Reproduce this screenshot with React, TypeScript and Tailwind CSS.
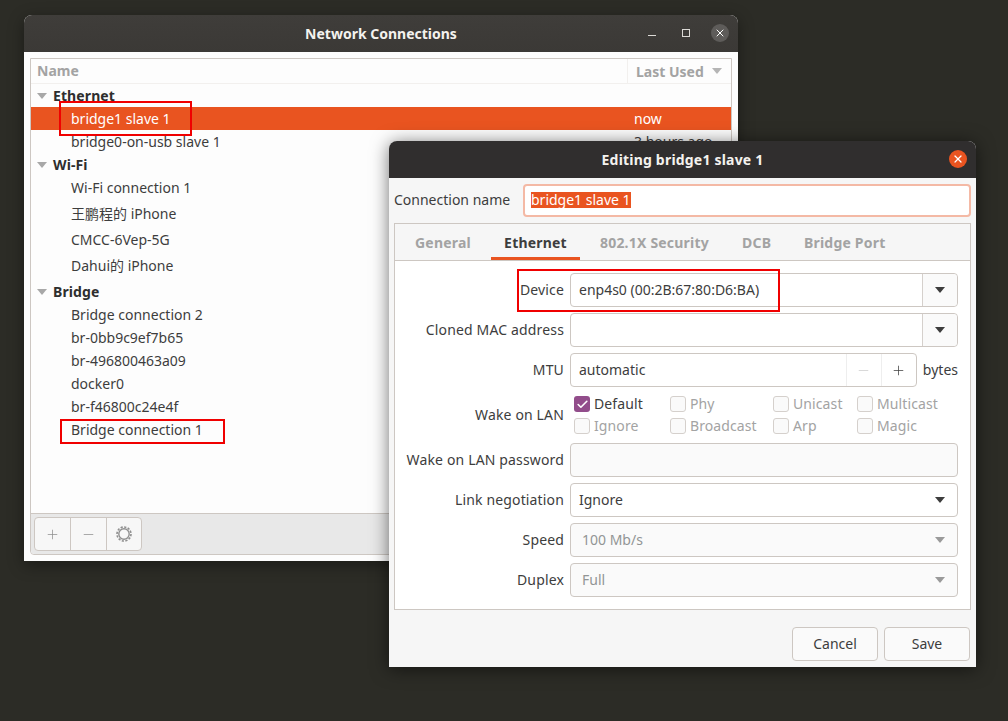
import { Check, Minus, Plus, X } from 'lucide-react'

const font = 'font-["Noto_Sans","Noto_Sans_CJK_SC",sans-serif]'

type Row = { name: string; group?: boolean; h: string; selected?: boolean; used?: string }

const rows: Row[] = [
  { name: 'Ethernet', group: true, h: 'h-[23px]' },
  { name: 'bridge1 slave 1', h: 'h-[23px]', selected: true, used: 'now' },
  { name: 'bridge0-on-usb slave 1', h: 'h-[23px]', used: '3 hours ago' },
  { name: 'Wi-Fi', group: true, h: 'h-[23px]' },
  { name: 'Wi-Fi connection 1', h: 'h-[23px]' },
  { name: '王鹏程的 iPhone', h: 'h-[29px]' },
  { name: 'CMCC-6Vep-5G', h: 'h-[23px]' },
  { name: 'Dahui的 iPhone', h: 'h-[29px]' },
  { name: 'Bridge', group: true, h: 'h-[23px]' },
  { name: 'Bridge connection 2', h: 'h-[23px]' },
  { name: 'br-0bb9c9ef7b65', h: 'h-[23px]' },
  { name: 'br-496800463a09', h: 'h-[23px]' },
  { name: 'docker0', h: 'h-[23px]' },
  { name: 'br-f46800c24e4f', h: 'h-[23px]' },
  { name: 'Bridge connection 1', h: 'h-[23px]' },
]

function Caret({ dim }: { dim?: boolean }) {
  return (
    <svg width="10" height="6" viewBox="0 0 10 6" className={dim ? 'fill-[#9a9a9a]' : 'fill-[#3d3d3d]'}>
      <path d="M0 0h10L5 6z" />
    </svg>
  )
}

function ListRow({ row }: { row: Row }) {
  return (
    <div
      className={`flex items-center text-[14px] ${row.h} ${
        row.selected ? 'bg-[#e95420] text-white' : 'text-[#3d3d3d]'
      }`}
    >
      <div className="flex w-[597px] items-center">
        {row.group ? (
          <>
            <svg width="10" height="6" viewBox="0 0 10 6" className="ml-[6px] mr-[6px] fill-[#a8a8a8]">
              <path d="M0 0h10L5 6z" />
            </svg>
            <span className="font-bold tracking-[0.1px] text-[#2e2e2e]">{row.name}</span>
          </>
        ) : (
          <span className="pl-[40px]">{row.name}</span>
        )}
      </div>
      {row.used && <span className="pl-[6px]">{row.used}</span>}
    </div>
  )
}

function Label({ text }: { text: string }) {
  return <div className="w-[169px] shrink-0 pb-[2px] pr-[6px] text-right tracking-[0.15px] text-[#3d3d3d]">{text}</div>
}

function Combo({ value, split, dim }: { value?: string; split?: boolean; dim?: boolean }) {
  return (
    <div
      className={`flex h-[34px] flex-1 items-center rounded-[4px] border border-[#cdc7c2] ${
        dim ? 'bg-[#fafafa] text-[#929595]' : 'bg-white text-[#3d3d3d]'
      }`}
    >
      <span className={`flex-1 pb-[2px] ${dim ? 'pl-[11px]' : 'pl-[8px]'}`}>{value}</span>
      {split ? (
        <span className="flex h-full w-[35px] items-center justify-center rounded-r-[4px] border-l border-[#d5d0cc] bg-[#fafafa]">
          <Caret />
        </span>
      ) : (
        <span className="flex w-[35px] items-center justify-center">
          <Caret dim={dim} />
        </span>
      )}
    </div>
  )
}

function Box({ label, on, w }: { label: string; on?: boolean; w: string }) {
  return (
    <div className={`flex items-center ${w}`}>
      {on ? (
        <span className="flex h-[16px] w-[16px] items-center justify-center rounded-[3px] bg-[#924d8b] text-white">
          <Check size={13} strokeWidth={3} />
        </span>
      ) : (
        <span className="h-[16px] w-[16px] rounded-[3px] border border-[#d5d0cc] bg-[#fafafa]" />
      )}
      <span className={`ml-[4px] pb-[1px] tracking-[0.1px] ${on ? 'text-[#3d3d3d]' : 'text-[#a3a3a3]'}`}>{label}</span>
    </div>
  )
}

function ToolBtn({ children, w, last }: { children: React.ReactNode; w: string; last?: boolean }) {
  return (
    <div
      className={`flex h-full items-center justify-center text-[#8f8f8f] ${w} ${
        last ? '' : 'border-r border-[#cdc7c2]'
      }`}
    >
      {children}
    </div>
  )
}

export default function App() {
  return (
    <div className={`relative h-[721px] w-[1008px] overflow-hidden bg-[#2c2c26] ${font}`}>
      {/* Network Connections window */}
      <div className="absolute left-[24px] top-[15px] flex h-[546px] w-[714px] flex-col overflow-hidden rounded-t-[8px] bg-[#fdfdfd] shadow-[0_4px_16px_rgba(0,0,0,0.4)]">
        <div className="relative flex h-[37px] shrink-0 items-center justify-center bg-gradient-to-b from-[#3f3d3a] to-[#3b3936] text-[14px] font-bold text-[#f4f2ee]">
          Network Connections
          <div className="absolute right-[9px] top-[9px] flex h-[18px] items-center">
            <span className="mr-[26px] h-[1px] w-[8px] translate-y-[2px] bg-[#dcdad6]" />
            <span className="mr-[21px] h-[8px] w-[8px] border border-[#dcdad6]" />
            <span className="flex h-[18px] w-[18px] items-center justify-center rounded-full bg-[#5e5c5a] text-white">
              <X size={12} strokeWidth={2} />
            </span>
          </div>
        </div>
        <div className="flex flex-1 flex-col p-[6px]">
          <div className="flex flex-1 flex-col rounded-b-[4px] border border-[#cdc7c2]">
            <div className="flex h-[25px] shrink-0 border-b border-[#f2f0ee] text-[14px] font-bold text-[#a3a3a3]">
              <div className="w-[597px] border-r border-[#f2f0ee] pl-[6px] leading-[24px]">Name</div>
              <div className="flex items-center pl-[8px]">
                Last Used
                <svg width="10" height="6" viewBox="0 0 10 6" className="ml-[8px] fill-[#b5b5b5]">
                  <path d="M0 0h10L5 6z" />
                </svg>
              </div>
            </div>
            <div className="flex-1">
              {rows.map((r) => (
                <ListRow key={r.name} row={r} />
              ))}
            </div>
            <div className="flex h-[41px] shrink-0 items-start rounded-b-[4px] border-t border-[#cdc7c2] bg-[#e8e8e8] p-[3px]">
              <div className="flex h-[34px] items-center rounded-[4px] border border-[#cdc7c2] bg-[#f7f7f7]">
                <ToolBtn w="w-[36px]">
                  <Plus size={15} strokeWidth={1.2} />
                </ToolBtn>
                <ToolBtn w="w-[36px]">
                  <Minus size={15} strokeWidth={1.2} />
                </ToolBtn>
                <ToolBtn w="w-[34px]" last>
                  <svg width="18" height="18" viewBox="0 0 18 18" fill="none" stroke="#8f8f8f">
                    <circle cx="9" cy="9" r="5.2" strokeWidth="1.4" />
                    <circle cx="9" cy="9" r="7" strokeWidth="1.6" strokeDasharray="2.2 1.46" />
                  </svg>
                </ToolBtn>
              </div>
            </div>
          </div>
        </div>
      </div>

      {/* Editing dialog */}
      <div className="absolute left-[389px] top-[141px] flex h-[526px] w-[587px] flex-col overflow-hidden rounded-t-[8px] bg-[#f6f6f6] text-[14px] text-[#3d3d3d] shadow-[0_2px_18px_rgba(0,0,0,0.55)]">
        <div className="relative flex h-[37px] shrink-0 items-center justify-center bg-[#302e2e] font-bold tracking-[0.2px] text-[#f4f2ee]">
          Editing bridge1 slave 1
          <span className="absolute right-[9px] top-[9px] flex h-[18px] w-[18px] items-center justify-center rounded-full bg-[#e95420] text-white">
            <X size={12} strokeWidth={2.4} />
          </span>
        </div>
        <div className="flex flex-col pl-[5px] pr-[5px] pt-[6px]">
          <div className="flex items-center">
            <span className="w-[129px] shrink-0 pb-[2px]">Connection name</span>
            <div className="flex h-[33px] flex-1 items-center rounded-[4px] border-2 border-[#f4b9a5] bg-white pb-[1px] pl-[6px]">
              <span className="bg-[#e95420] leading-[16px] text-white">bridge1 slave 1</span>
            </div>
          </div>
          <div className="mt-[6px] flex h-[387px] flex-col border border-[#cdc7c2] bg-white">
            <div className="flex h-[37px] shrink-0 items-stretch border-b border-[#cdc7c2] bg-[#f6f6f6] font-bold tracking-[0.2px] text-[#a3a3a3]">
              <div className="flex w-[96px] items-center pl-[20px]">General</div>
              <div className="flex w-[89px] items-center justify-center border-b-[3px] border-[#e95420] pt-[3px] text-[#3d3d3d]">Ethernet</div>
              <div className="flex w-[162px] items-center pl-[20px]">802.1X Security</div>
              <div className="flex w-[62px] items-center">DCB</div>
              <div className="flex items-center">Bridge Port</div>
            </div>
            <div className="flex flex-col gap-[6px] pl-[6px] pr-[12px] pt-[12px]">
              <div className="flex items-center">
                <Label text="Device" />
                <Combo value="enp4s0 (00:2B:67:80:D6:BA)" split />
              </div>
              <div className="flex items-center">
                <Label text="Cloned MAC address" />
                <Combo split />
              </div>
              <div className="flex items-center">
                <Label text="MTU" />
                <div className="flex h-[34px] flex-1 items-center rounded-[4px] border border-[#cdc7c2] bg-white">
                  <span className="flex-1 pb-[2px] pl-[8px]">automatic</span>
                  <span className="flex h-full w-[35px] items-center justify-center border-l border-[#eeeeee] text-[#cccccc]">
                    <Minus size={15} strokeWidth={1.2} />
                  </span>
                  <span className="flex h-full w-[35px] items-center justify-center border-l border-[#eeeeee] text-[#3d3d3d]">
                    <Plus size={15} strokeWidth={1.2} />
                  </span>
                </div>
                <span className="ml-[6px] pb-[2px]">bytes</span>
              </div>
              <div className="flex h-[44px] items-center">
                <Label text="Wake on LAN" />
                <div className="flex flex-col gap-[2px] pl-[4px]">
                  <div className="flex h-[20px]">
                    <Box label="Default" on w="w-[96px]" />
                    <Box label="Phy" w="w-[103px]" />
                    <Box label="Unicast" w="w-[84px]" />
                    <Box label="Multicast" w="w-[90px]" />
                  </div>
                  <div className="flex h-[20px]">
                    <Box label="Ignore" w="w-[96px]" />
                    <Box label="Broadcast" w="w-[103px]" />
                    <Box label="Arp" w="w-[84px]" />
                    <Box label="Magic" w="w-[90px]" />
                  </div>
                </div>
              </div>
              <div className="flex items-center">
                <Label text="Wake on LAN password" />
                <div className="h-[34px] flex-1 rounded-[4px] border border-[#cdc7c2] bg-[#fafafa]" />
              </div>
              <div className="flex items-center">
                <Label text="Link negotiation" />
                <Combo value="Ignore" />
              </div>
              <div className="flex items-center">
                <Label text="Speed" />
                <Combo value="100 Mb/s" dim />
              </div>
              <div className="flex items-center">
                <Label text="Duplex" />
                <Combo value="Full" dim />
              </div>
            </div>
          </div>
          <div className="mt-[17px] flex justify-end gap-[6px] pr-[1px]">
            <div className="flex h-[34px] w-[86px] items-center justify-center rounded-[4px] border border-[#cdc7c2] bg-[#fafafa] pb-[2px]">Cancel</div>
            <div className="flex h-[34px] w-[86px] items-center justify-center rounded-[4px] border border-[#cdc7c2] bg-[#fafafa] pb-[2px]">Save</div>
          </div>
        </div>
      </div>

      {/* Red annotation boxes */}
      <div className="absolute left-[59px] top-[101px] h-[35px] w-[133px] border-2 border-[#f00000]" />
      <div className="absolute left-[60px] top-[419px] h-[25px] w-[165px] border-2 border-[#f00000]" />
      <div className="absolute left-[517px] top-[269px] h-[43px] w-[263px] border-2 border-[#f00000]" />
    </div>
  )
}
